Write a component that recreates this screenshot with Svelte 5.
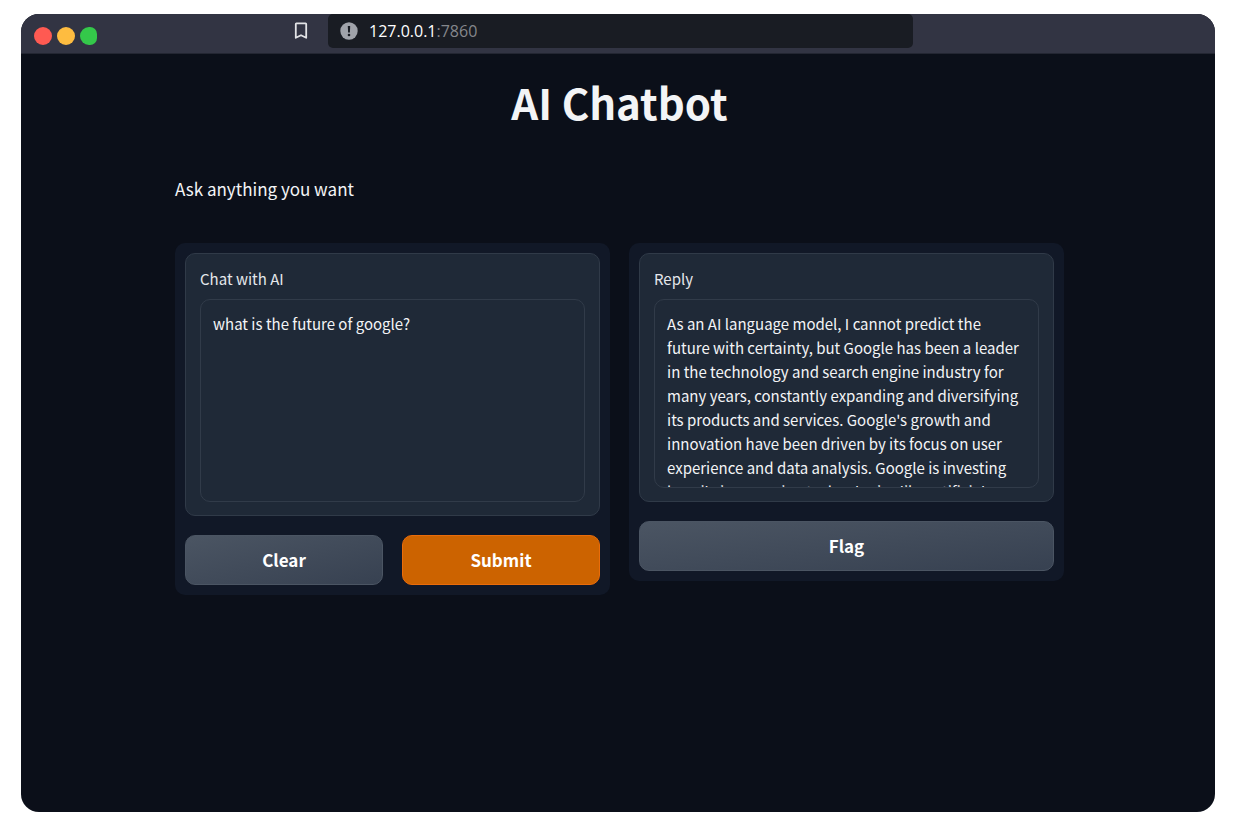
<script>
  let prompt = $state('what is the future of google?');
  let reply = $state(
    "As an AI language model, I cannot predict the future with certainty, but Google has been a leader in the technology and search engine industry for many years, constantly expanding and diversifying its products and services. Google's growth and innovation have been driven by its focus on user experience and data analysis. Google is investing heavily in emerging technologies like artificial"
  );
  const lights = ['#ff5a52', '#febc40', '#34c84a'];

  function clear() {
    prompt = '';
    reply = '';
  }
</script>

<div class="window">
  <header>
    <div class="lights">
      {#each lights as color}
        <span style:background={color}></span>
      {/each}
    </div>
    <button class="bookmark" aria-label="Bookmark">
      <svg width="14" height="18" viewBox="0 0 14 18" fill="none" stroke="#e2e3e6" stroke-width="1.8" stroke-linejoin="round">
        <path d="M2.4 1.4h9.2q.6 0 .6.6v13.8L7 13.2l-5.2 2.6V2q0-.6.6-.6Z" />
      </svg>
    </button>
    <div class="address">
      <svg width="18" height="18" viewBox="0 0 18 18">
        <circle cx="9" cy="9" r="8.7" fill="#a0a3aa" />
        <path d="M7.8 4h2.4l-.3 6.4H8.1Z" fill="#191c23" />
        <circle cx="9" cy="13" r="1.3" fill="#191c23" />
      </svg>
      <span class="url">127.0.0.1<span class="port">:7860</span></span>
    </div>
  </header>

  <main>
    <h1>AI Chatbot</h1>
    <p>Ask anything you want</p>
    <div class="columns">
      <section class="panel">
        <div class="block">
          <label for="prompt">Chat with AI</label>
          <textarea id="prompt" class="prompt" spellcheck="false" bind:value={prompt}></textarea>
        </div>
        <div class="actions">
          <button class="action" onclick={clear}>Clear</button>
          <button class="action primary">Submit</button>
        </div>
      </section>
      <section class="panel">
        <div class="block">
          <label for="reply">Reply</label>
          <textarea id="reply" class="reply" spellcheck="false" readonly value={reply}></textarea>
        </div>
        <div class="actions">
          <button class="action">Flag</button>
        </div>
      </section>
    </div>
  </main>
</div>

<style>
  :global(body) {
    background: #fff;
  }
  :global(#app) {
    display: flex;
    min-height: 100vh;
    box-sizing: border-box;
    padding: 14px 22px 16px 21px;
  }
  * {
    box-sizing: border-box;
  }
  .window {
    flex: 1;
    min-width: 0;
    border-radius: 18px;
    overflow: hidden;
    background: #0b0f19;
    color: #f3f4f6;
    font-family: 'Noto Sans CJK SC', 'Noto Sans', sans-serif;
  }
  header {
    display: flex;
    align-items: flex-start;
    height: 40px;
    padding-left: 13px;
    background: #323443;
    border-bottom: 1px solid #232632;
  }
  .lights {
    display: flex;
    gap: 5px;
    margin-top: 13px;
  }
  .lights span {
    width: 18px;
    height: 18px;
    border-radius: 50%;
  }
  .lights span:last-child {
    width: 17px;
    border-radius: 9px 7px 7px 9px;
  }
  .bookmark {
    display: flex;
    margin: 8px 0 0 197px;
    padding: 0;
    border: 0;
    background: none;
  }
  .address {
    display: flex;
    align-items: center;
    gap: 11px;
    width: 49.5%;
    height: 34px;
    margin-left: 20px;
    padding-left: 12px;
    border-radius: 5px;
    background: #191c23;
  }
  .url {
    color: #fff;
    font: 16px/24px 'Open Sans', sans-serif;
  }
  .port {
    color: #85878c;
  }
  main {
    padding: 20px 151px 20px 154px;
  }
  h1 {
    margin: 0;
    text-align: center;
    font-size: 42px;
    line-height: 56px;
    font-weight: 700;
  }
  p {
    margin: 47px 0 42px;
    font-size: 17px;
    line-height: 24px;
  }
  .columns {
    display: flex;
    align-items: flex-start;
    gap: 19px;
  }
  .panel {
    flex: 1;
    min-width: 0;
    padding: 10px;
    border-radius: 10px;
    background: #111827;
  }
  .block {
    padding: 13px 14px;
    border: 1px solid #303a48;
    border-radius: 10px;
    background: #1f2937;
  }
  label {
    display: block;
    margin-bottom: 8px;
    font-size: 15px;
    line-height: 24px;
    color: #e5e7eb;
  }
  textarea {
    display: block;
    width: 100%;
    padding: 12px;
    border: 1px solid #313b49;
    border-radius: 10px;
    outline: 0;
    resize: none;
    overflow: hidden;
    background: transparent;
    color: #f3f4f6;
    font: 15px/24px 'Noto Sans CJK SC', 'Noto Sans', sans-serif;
  }
  .prompt {
    height: 203px;
  }
  .reply {
    height: 189px;
  }
  .actions {
    display: flex;
    gap: 19px;
    margin-top: 19px;
  }
  .action {
    flex: 1;
    height: 50px;
    padding: 0;
    border: 1px solid #4b5563;
    border-radius: 10px;
    background: linear-gradient(to bottom right, #4b5563, #374151);
    color: #fff;
    font: 700 17px/24px 'Noto Sans CJK SC', 'Noto Sans', sans-serif;
  }
  .primary {
    border-color: #ea6c0a;
    background: #cc6300;
  }
</style>
